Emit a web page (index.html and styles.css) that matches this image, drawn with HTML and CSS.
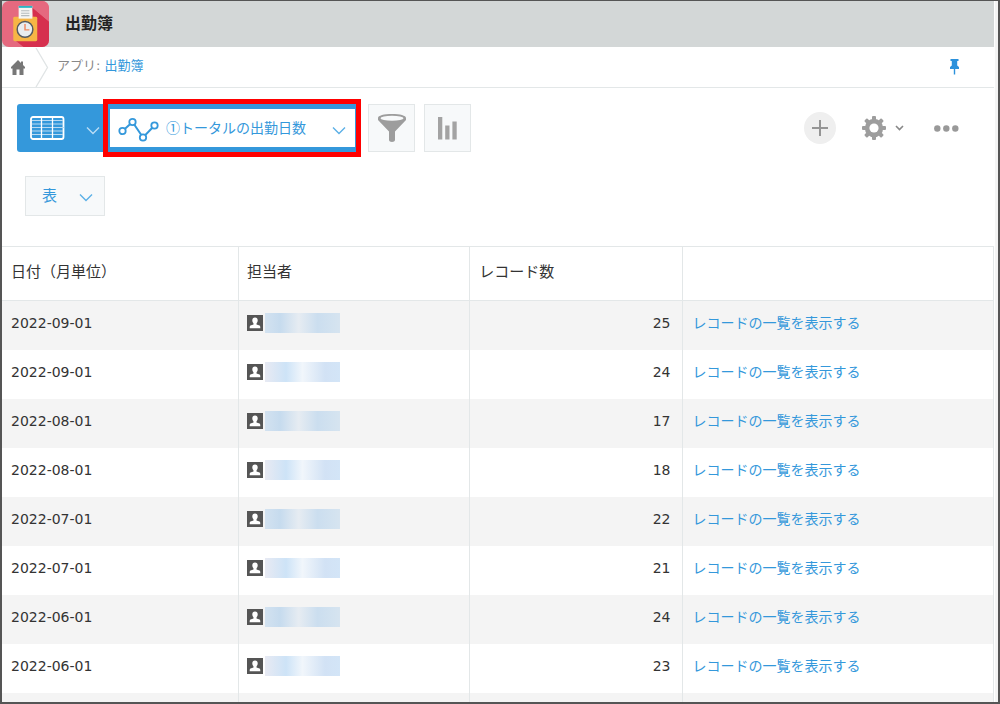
FILE: index.html
```html
<!DOCTYPE html>
<html lang="ja">
<head>
<meta charset="utf-8">
<title>出勤簿</title>
<link rel="stylesheet" href="styles.css">
</head>
<body>
<svg class="defs" aria-hidden="true">
  <symbol id="chevron" viewBox="0 0 14 9"><path d="M1 1.5 7 7.5 13 1.5" fill="none" stroke="currentColor" stroke-width="1.4"/></symbol>
  <symbol id="user" viewBox="0 0 16 16"><rect width="16" height="16" fill="#555"/><path d="M8 2.6c1.900 0 2.800 1.300 2.700 3-.1 1.300-.6 2.200-1.200 2.800v1l3 1.200c.6.300.8.800.8 2.600H2.700c0-1.800.2-2.300.8-2.600l3-1.200v-1c-.6-.6-1.100-1.500-1.200-2.800-.1-1.700.8-3 2.700-3z" fill="#fff"/></symbol>
</svg>
<div class="app">
  <header class="titlebar">
    <svg class="app-icon" viewBox="0 0 48 47" aria-hidden="true">
      <defs><clipPath id="tile"><rect width="48" height="47" rx="7"/></clipPath></defs>
      <g clip-path="url(#tile)">
        <rect width="48" height="47" fill="#e5697f"/>
        <path d="M30 6 48 21V47H22L12 39 32 16z" fill="#d6304e"/>
        <path d="M28 0H48V21L30 6z" fill="#e5697f"/>
      </g>
      <rect x="11.500" y="16" width="24.500" height="25" rx="1.500" fill="#f6b545"/>
      <rect x="17" y="5" width="14" height="13" fill="#f5f5f3"/>
      <rect x="17" y="5" width="14" height="2" fill="#2ab5c4"/>
      <path d="M19.500 10h8.500M19.500 12.500h8.500M19.500 15h8.500" stroke="#b5bcbf" stroke-width="1.200"/>
      <circle cx="23.500" cy="29" r="8" fill="#e9edef" stroke="#555b61" stroke-width="1.500"/>
      <path d="M23.500 23.500V29.500H28" fill="none" stroke="#ef8a62" stroke-width="1.500"/>
    </svg>
    <h1 class="title">出勤簿</h1>
  </header>
  <nav class="breadcrumb" aria-label="パンくず">
    <a class="home" href="#" aria-label="ホーム"><svg width="14" height="15" viewBox="0 0 14 15"><path d="M7 0 0 7v1.500h1.500V15H5.500V9.500h3V15h4V8.500H14V7L12 5V1.500h-2V3z" fill="#777"/></svg></a>
    <svg class="crumb-sep" width="14" height="39" viewBox="0 0 14 39" aria-hidden="true"><path d="M1 0 12.500 19.500 1 39" fill="none" stroke="#e0e4e5" stroke-width="1.300"/></svg>
    <span class="crumb">アプリ: <a href="#">出勤簿</a></span>
    <button class="plain pin" type="button" aria-label="ピン留め"><svg width="9" height="16" viewBox="0 0 9 16"><path d="M.5 0h8v2H7.200v4.500L9 8v2H5.200v5.500H3.800V10H0V8l1.800-1.500V2H.5z" fill="#2b91dc"/></svg></button>
  </nav>
  <main>
    <div class="toolbar">
      <div class="views">
        <button class="plain list-view" type="button" aria-label="一覧">
          <svg width="35" height="24" viewBox="0 0 35 24"><rect x="1" y="1" width="32.500" height="22" rx="2" fill="none" stroke="#fff" stroke-width="1.800"/><path d="M2 4.500h31M2 8h31M2 11.500h32M2 15h31M2 18.500h31" stroke="#b9daf2" stroke-width="1.200"/><path d="M11.500 1v22M22.500 1v22" stroke="#fff" stroke-width="1.300"/></svg>
          <svg class="chev" width="14" height="9"><use href="#chevron"/></svg>
        </button>
        <div class="graph-picker">
          <svg class="graph-icon" width="41" height="25" viewBox="0 0 41 25" aria-hidden="true"><path d="M4.500 14 14.500 5 25 20.500 36.500 8.500" fill="none" stroke="#3498db" stroke-width="2"/><g fill="#fff" stroke="#3498db" stroke-width="1.800"><circle cx="4.500" cy="14" r="3.200"/><circle cx="14.500" cy="5" r="3.200"/><circle cx="25" cy="20.500" r="3.200"/><circle cx="36.500" cy="8.500" r="3.200"/></g></svg>
          <select class="graph-select" aria-label="グラフ"><option>①トータルの出勤日数</option></select>
          <svg class="chev graph-chev" width="14" height="9"><use href="#chevron"/></svg>
        </div>
      </div>
      <button class="tool" type="button" aria-label="絞り込み"><svg width="28" height="29" viewBox="0 0 28 29"><path d="M0 4C0 1.500 6 0 14 0s14 1.500 14 4v2L17 17.500V26c0 2.500-6 2.500-6 0V17.500L0 6z" fill="#9d9d9d"/><ellipse cx="14" cy="4.200" rx="11.500" ry="2.500" fill="#f7f9fa"/></svg></button>
      <button class="tool" type="button" aria-label="グラフ"><svg width="19" height="23" viewBox="0 0 19 23"><path d="M0 0h4.300v22.500H0zM7.200 8.500h4.300v14H7.200zM14.400 4.500h4.300v18h-4.300z" fill="#a3a3a3"/></svg></button>
      <div class="actions">
        <button class="plain add" type="button" aria-label="追加"><svg width="16" height="16" viewBox="0 0 16 16"><path d="M8 0v16M0 8h16" stroke="#959595" stroke-width="2"/></svg></button>
        <button class="plain settings" type="button" aria-label="設定">
          <svg width="24" height="24" viewBox="-12 -12 24 24"><g fill="#9d9d9d"><circle r="9.200"/><g id="teeth"><rect x="-2" y="-12" width="4" height="24" rx="1"/><rect x="-12" y="-2" width="24" height="4" rx="1"/></g><use href="#teeth" transform="rotate(45)"/></g><circle r="4.600" fill="#fff"/></svg>
          <svg width="9" height="6" viewBox="0 0 9 6"><path d="M1 1 4.500 4.500 8 1" fill="none" stroke="#888" stroke-width="1.600"/></svg>
        </button>
        <button class="plain more" type="button" aria-label="その他"><svg width="25" height="7" viewBox="0 0 25 7"><g fill="#999"><circle cx="3.300" cy="3.500" r="3.200"/><circle cx="12.300" cy="3.500" r="3.200"/><circle cx="21.300" cy="3.500" r="3.200"/></g></svg></button>
      </div>
    </div>
    <div class="type-picker">
      <select class="type-select" aria-label="表示形式"><option>表</option></select>
      <svg class="chev type-chev" width="14" height="9"><use href="#chevron"/></svg>
    </div>
    <table class="records">
      <thead><tr><th class="c-date">日付（月単位）</th><th class="c-user">担当者</th><th class="c-count">レコード数</th><th></th></tr></thead>
      <tbody>
        <tr><td>2022-09-01</td><td><span class="user"><svg width="16" height="16"><use href="#user"/></svg><span class="masked"></span></span></td><td class="num">25</td><td><a href="#">レコードの一覧を表示する</a></td></tr>
        <tr><td>2022-09-01</td><td><span class="user"><svg width="16" height="16"><use href="#user"/></svg><span class="masked"></span></span></td><td class="num">24</td><td><a href="#">レコードの一覧を表示する</a></td></tr>
        <tr><td>2022-08-01</td><td><span class="user"><svg width="16" height="16"><use href="#user"/></svg><span class="masked"></span></span></td><td class="num">17</td><td><a href="#">レコードの一覧を表示する</a></td></tr>
        <tr><td>2022-08-01</td><td><span class="user"><svg width="16" height="16"><use href="#user"/></svg><span class="masked"></span></span></td><td class="num">18</td><td><a href="#">レコードの一覧を表示する</a></td></tr>
        <tr><td>2022-07-01</td><td><span class="user"><svg width="16" height="16"><use href="#user"/></svg><span class="masked"></span></span></td><td class="num">22</td><td><a href="#">レコードの一覧を表示する</a></td></tr>
        <tr><td>2022-07-01</td><td><span class="user"><svg width="16" height="16"><use href="#user"/></svg><span class="masked"></span></span></td><td class="num">21</td><td><a href="#">レコードの一覧を表示する</a></td></tr>
        <tr><td>2022-06-01</td><td><span class="user"><svg width="16" height="16"><use href="#user"/></svg><span class="masked"></span></span></td><td class="num">24</td><td><a href="#">レコードの一覧を表示する</a></td></tr>
        <tr><td>2022-06-01</td><td><span class="user"><svg width="16" height="16"><use href="#user"/></svg><span class="masked"></span></span></td><td class="num">23</td><td><a href="#">レコードの一覧を表示する</a></td></tr>
        <tr><td></td><td></td><td></td><td></td></tr>
      </tbody>
    </table>
  </main>
</div>
</body>
</html>
```
FILE: styles.css
```css
* { box-sizing: border-box; }
body {
  margin: 0;
  font-family: "DejaVu Sans", "Noto Sans CJK JP", sans-serif;
  font-size: 14px;
  line-height: 20px;
  color: #333;
}
a { color: #3498db; text-decoration: none; }
svg { display: block; flex: none; }
button, select { font: inherit; cursor: pointer; }
.defs { position: absolute; width: 0; height: 0; }
.plain { padding: 0; border: 0; background: none; }
.app {
  height: 100vh;
  overflow: hidden;
  border: 2px solid #555;
  border-top-width: 1px;
  padding-right: 4px;
  background: linear-gradient(#f4f4f4, #f4f4f4) right / 3px 100% no-repeat #fff;
}
.titlebar { display: flex; align-items: center; gap: 16px; height: 46px; background: #d3d7d7; }
.app-icon { width: 47px; height: 46px; }
.title {
  margin: 0;
  padding-bottom: 4px;
  font-family: "Noto Sans CJK JP", sans-serif;
  font-size: 16px;
  font-weight: 700;
  line-height: 24px;
  color: #222;
}

.breadcrumb {
  display: flex;
  align-items: center;
  height: 41px;
  padding: 0 35px 0 9px;
  border-bottom: 1px solid #e3e7e8;
  font-size: 13px;
  color: #888;
}
.crumb { padding-bottom: 2px; }
.crumb-sep { margin: 0 8px 0 10px; }
.pin { margin-left: auto; }

.toolbar { display: flex; gap: 9px; height: 48px; margin: 16px 35px 0 15px; }
.views { display: flex; margin-right: 3px; border-radius: 3px; background: #3498db; }
.list-view { display: flex; align-items: center; gap: 21px; width: 91px; padding-left: 13px; }
.graph-picker {
  position: relative;
  width: 248px;
  border: solid #3498db;
  border-width: 5px 1px 5px 2px;
  outline: 5px solid #f00;
}
.chev { color: #5cb0e6; }
.list-view .chev { margin-top: 5px; color: #b9dcf5; }
.graph-select, .type-select {
  appearance: none;
  width: 100%;
  height: 100%;
  border: 0;
  border-radius: 0;
  background: #fff;
  color: #3498db;
  font-family: "Noto Sans CJK JP", sans-serif;
}
.graph-select { padding: 0 36px 2px 56px; }
.graph-icon { position: absolute; left: 8px; top: 8px; pointer-events: none; }
.graph-chev, .type-chev { position: absolute; top: 17px; pointer-events: none; }
.graph-chev { right: 9px; }
.tool {
  display: flex;
  align-items: center;
  justify-content: center;
  width: 47px;
  padding: 0;
  border: 1px solid #e3e7e8;
  background: #f7f9fa;
}
.actions { display: flex; align-items: center; margin-left: auto; }
.add {
  display: flex;
  align-items: center;
  justify-content: center;
  width: 32px;
  height: 32px;
  border-radius: 50%;
  background: #efefef;
}
.settings { display: flex; align-items: center; gap: 9px; margin: 0 30px 0 26px; }

.type-picker { position: relative; width: 80px; height: 40px; margin: 24px 0 30px 23px; }
.type-select { padding: 0 32px 2px 16px; border: 1px solid #e3e7e8; background: #f7f9fa; font-size: 15px; }
.type-chev { right: 12px; }

.records {
  width: 100%;
  table-layout: fixed;
  border-spacing: 0;
  border-top: 1px solid #e3e7e8;
}
.records th, .records td { padding: 12px 9px; border-right: 1px solid #e3e7e8; text-align: left; vertical-align: top; }
.records th:nth-child(2), .records td:nth-child(2) { padding-left: 8px; }
.records th {
  height: 54px;
  padding: 14px 9px;
  border-bottom: 1px solid #e3e7e8;
  font-family: "Noto Sans CJK JP", sans-serif;
  font-size: 15px;
  font-weight: 400;
}
.records td { height: 49px; }
.records .num { padding-right: 12px; text-align: right; }
.records tbody tr:nth-child(odd) { background: #f4f4f4; }
.c-date { width: 23.9%; }
.c-user { width: 23.3%; }
.c-count { width: 21.5%; }
.user { display: flex; align-items: center; gap: 2px; }
.masked {
  width: 75px;
  height: 20px;
  background: linear-gradient(90deg, #d3e2f0, #c6dbee 20%, #e6ecf2 45%, #cbdeef 70%, #d6e4f0);
}
.records tr:nth-child(even) .masked {
  background: linear-gradient(90deg, #e8eaf3, #cde3f7 28%, #f1f6fb 50%, #d2e2f5 80%, #d3e5f7);
}
```
